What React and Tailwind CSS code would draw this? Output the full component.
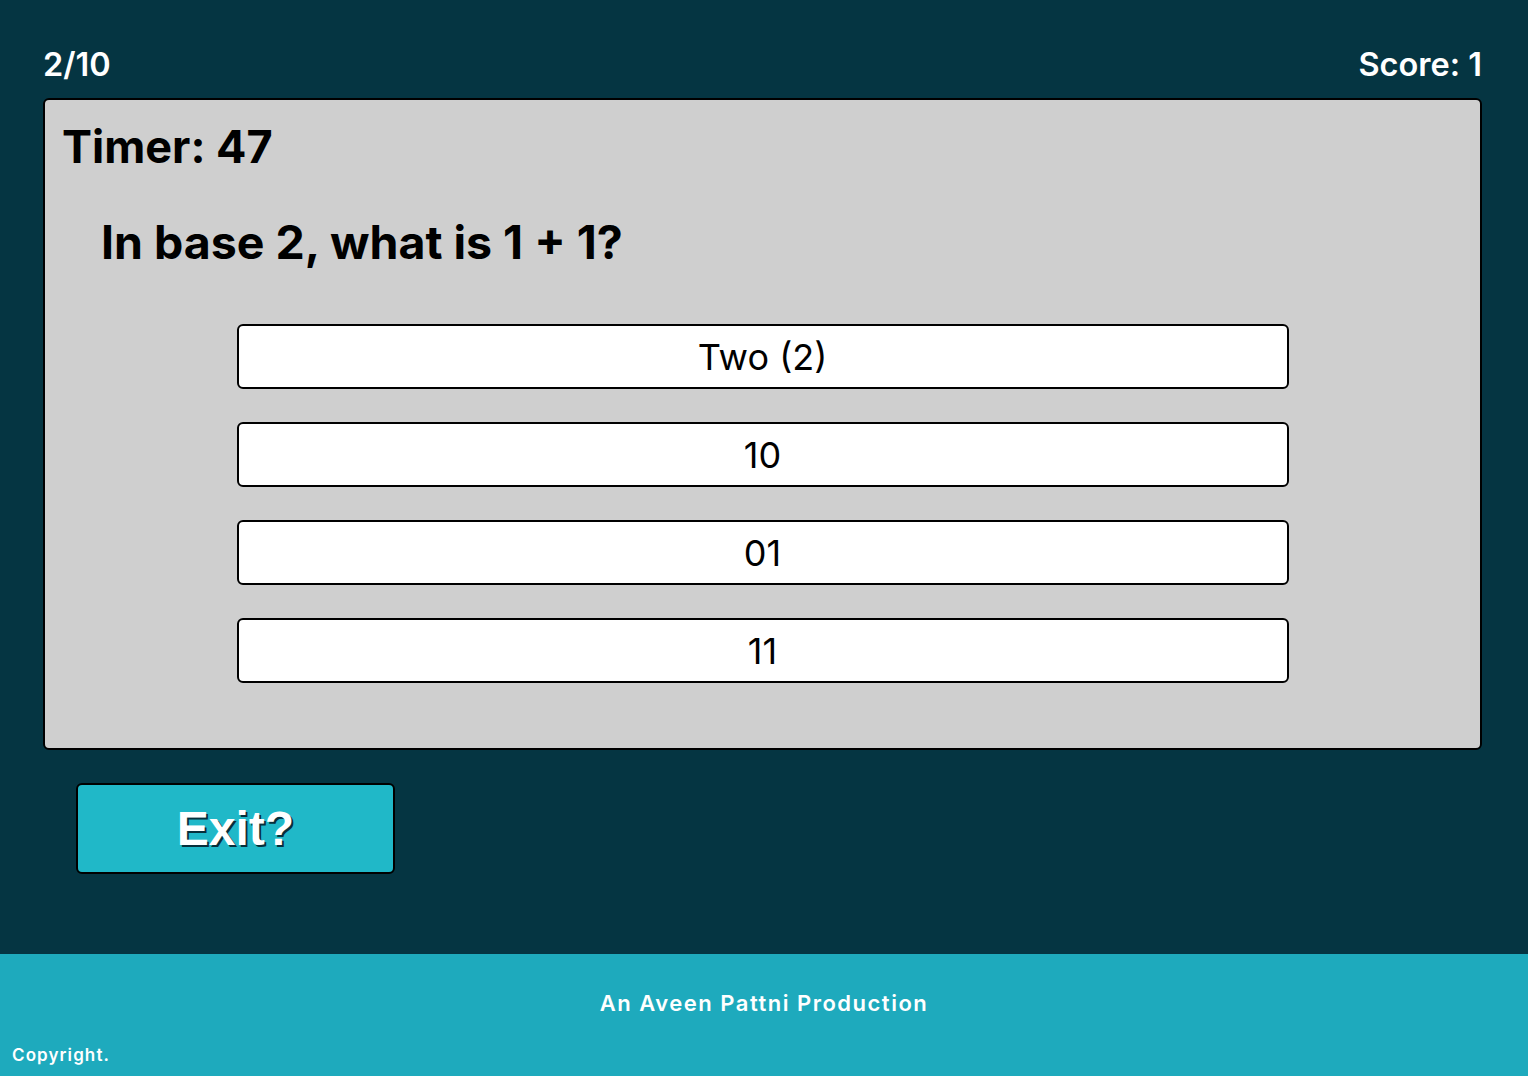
export default function App() {
  const options = ["Two (2)", "10", "01", "11"];
  return (
    <div className="min-h-[1076px] flex flex-col bg-[#053542]" style={{ fontFamily: "Inter, 'Noto Sans', sans-serif" }}>
      <main className="flex-1 pl-[43px] pr-[46px] pt-[43px]">
        <div className="flex justify-between items-center text-white text-[32.5px] font-semibold leading-[44px]">
          <span>2/10</span>
          <span>Score: 1</span>
        </div>
        <div className="mt-[11px] h-[652px] bg-[#cfcfcf] border-2 border-black rounded-[6px] px-[17px] pt-[17px]">
          <div className="text-[45px] font-bold leading-[60px] text-black">Timer: 47</div>
          <div className="pl-[39px] mt-[35px] text-[46.5px] font-bold leading-[60px] text-black">In base 2, what is 1 + 1?</div>
          <div className="mt-[52px] flex flex-col gap-[33px] items-center">
            {options.map((o) => (
              <button key={o} className="w-[1052px] h-[65px] bg-white border-2 border-black rounded-[6px] text-[36px] text-black leading-none">
                {o}
              </button>
            ))}
          </div>
        </div>
        <button
          className="mt-[33px] ml-[33px] w-[319px] h-[91px] bg-[#20b8c8] border-2 border-black rounded-[6px] text-white text-[48px] font-bold [text-shadow:2px_2px_0_#06303c]"
          style={{ fontFamily: "'Liberation Sans', Arial, sans-serif" }}
        >
          Exit?
        </button>
      </main>
      <footer className="mt-[80px] h-[122px] bg-[#1eaabd] relative text-white font-semibold">
        <div className="pt-[33px] text-center text-[22px] tracking-[1.5px]">An Aveen Pattni Production</div>
        <div className="absolute left-[12px] bottom-[8px] text-[17px] tracking-[1.1px]">Copyright.</div>
      </footer>
    </div>
  );
}
